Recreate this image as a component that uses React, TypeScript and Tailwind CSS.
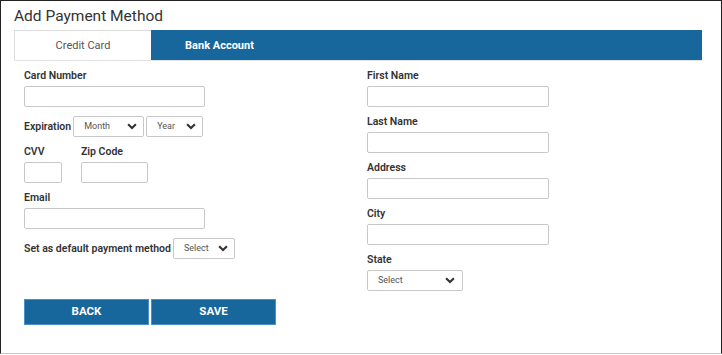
import React from "react";

const Chevron = () => (
  <svg width="10" height="7" viewBox="0 0 10 7" className="shrink-0">
    <path d="M1.1 1.3 L5 5.1 L8.9 1.3" fill="none" stroke="#333" strokeWidth="2.1" strokeLinecap="butt" />
  </svg>
);

const Input = ({ w }: { w: string }) => (
  <div className={`${w} h-[21px] border border-[#c8c8c8] rounded-[2px] bg-white`} />
);

const Select = ({ w, label, pl = "pl-[10px]", pr = "pr-[6px]" }: { w: string; label: string; pl?: string; pr?: string }) => (
  <div className={`${w} h-[21px] border border-[#c8c8c8] rounded-[2px] bg-white flex items-center justify-between ${pl} ${pr}`}>
    <span className="text-[9px] text-[#555] leading-none">{label}</span>
    <Chevron />
  </div>
);

const Label = ({ children }: { children: React.ReactNode }) => (
  <div className="text-[10.5px] font-semibold leading-[14px] text-[#333]">{children}</div>
);

export default function App() {
  return (
    <div
      className="w-[722px] h-[354px] bg-white border-l border-t border-r border-[#222] border-b border-b-[#c8c8c8] px-[13px]"
      style={{ fontFamily: "Roboto, 'Liberation Sans', sans-serif" }}
    >
      <div className="h-[29px] pt-[5px] text-[15.5px] leading-[20px] text-[#333]">Add Payment Method</div>
      <div className="w-[688px] h-[31px] flex bg-[#17669c] border-b border-[#e3e3e3]">
        <div className="w-[137px] h-[30px] pt-[2px] bg-white border-l border-t border-[#dcdcdc] flex items-center justify-center text-[11px] text-[#555]">
          Credit Card
        </div>
        <div className="w-[137px] h-[30px] pt-[2px] flex items-center justify-center text-[11px] font-bold text-white">
          Bank Account
        </div>
      </div>
      <div className="flex pl-[10px]">
        <div className="w-[343px] flex flex-col pt-[8px]">
          <Label>Card Number</Label>
          <div className="mt-[3px]"><Input w="w-[181px]" /></div>
          <div className="mt-[9px] flex items-center gap-[2px]">
            <span className="text-[10.5px] font-semibold text-[#333]">Expiration</span>
            <Select w="w-[71px]" label="Month" />
            <Select w="w-[57px]" label="Year" />
          </div>
          <div className="mt-[8px] flex gap-[19px]">
            <div className="flex flex-col">
              <Label>CVV</Label>
              <div className="mt-[3px]"><Input w="w-[38px]" /></div>
            </div>
            <div className="flex flex-col">
              <Label>Zip Code</Label>
              <div className="mt-[3px]"><Input w="w-[67px]" /></div>
            </div>
          </div>
          <div className="mt-[8px]"><Label>Email</Label></div>
          <div className="mt-[3px]"><Input w="w-[181px]" /></div>
          <div className="mt-[9px] flex items-center gap-[2px]">
            <span className="text-[10.5px] font-semibold text-[#333]">Set as default payment method</span>
            <Select w="w-[62px]" label="Select" />
          </div>
          <div className="mt-[40px] flex gap-[2px]">
            <button className="w-[125px] h-[26px] bg-[#17669c] border border-[#4b8fcc] text-white text-[11.5px] font-bold">BACK</button>
            <button className="w-[125px] h-[26px] bg-[#17669c] border border-[#4b8fcc] text-white text-[11.5px] font-bold">SAVE</button>
          </div>
        </div>
        <div className="flex flex-col pt-[8px]">
          {["First Name", "Last Name", "Address", "City"].map((l, i) => (
            <div key={l} className={i === 0 ? "" : "mt-[8px]"}>
              <Label>{l}</Label>
              <div className="mt-[3px]"><Input w="w-[182px]" /></div>
            </div>
          ))}
          <div className="mt-[8px]">
            <Label>State</Label>
            <div className="mt-[3px]"><Select w="w-[96px]" label="Select" pr="pr-[7px]" /></div>
          </div>
        </div>
      </div>
    </div>
  );
}
